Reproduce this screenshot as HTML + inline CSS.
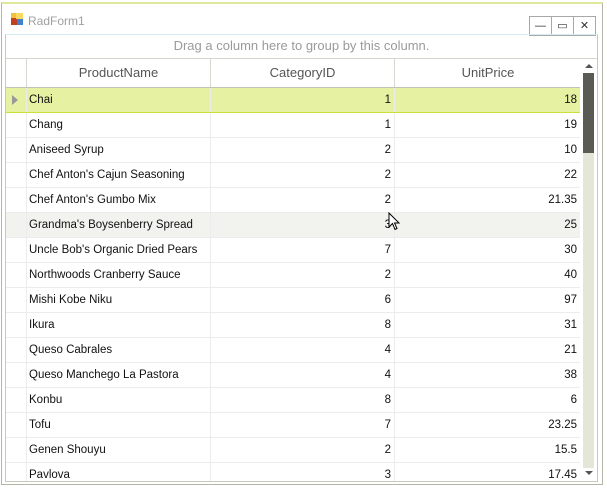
<!DOCTYPE html><html><head><style>
body{margin:0;width:607px;height:497px;background:#fff;position:relative;overflow:hidden;font-family:"Liberation Sans",sans-serif}
.win{position:absolute;left:1px;top:2px;width:600px;height:480px;border:1px solid #b4b4a8;border-top:2px solid #dfe89a;background:#fff}
.title{position:absolute;left:26px;top:10px;font-size:12px;color:#a0a0a0}
.icon{position:absolute;left:9px;top:9px;width:12px;height:12px}
.btn{position:absolute;top:12px;width:21px;height:18px;border:1px solid #a8a8a8;background:#fff;font-size:11px;text-align:center;line-height:18px;color:#333}
.grid{position:absolute;left:3px;top:30px;width:591px;height:446px;border:1px solid #c8c8bc;border-top-color:#d4ecf4;overflow:hidden}
.group{height:23px;border-bottom:1px solid #d6d6cc;text-align:center;font-size:13px;color:#9a9a9a;line-height:22px}
.hdr{position:absolute;top:24px;left:0;height:28px;width:574px;border-bottom:1px solid #c2c2b6}
.hdr div{position:absolute;top:0;height:28px;border-left:1px solid #d8d8d0;font-size:13px;color:#555;text-align:center;line-height:28px}
.row{position:absolute;left:0;width:574px;height:24px;border-bottom:1px solid #ececec;font-size:11.5px;color:#111}
.row div{position:absolute;top:0;height:24px;line-height:24px;border-left:1px solid #ececec;white-space:nowrap}
.c1{left:20px;width:180px;padding-left:2px}
.c2{left:204px;width:180px;text-align:right;padding-right:3px}
.c3{left:388px;width:182px;text-align:right;padding-right:3px}
.sel{background:#e6f2a2;border-bottom:1px solid #cbe03a}
.sb{position:absolute;left:575px;top:24px;width:15px;height:424px;background:#fff}
</style></head><body>
<div class="win">
<svg class="icon" viewBox="0 0 12 12"><rect x="0" y="0" width="12" height="12" fill="#f0c040"/><rect x="0" y="5" width="6" height="7" fill="#c04020"/><rect x="6" y="6" width="6" height="6" fill="#4080d0"/><rect x="5" y="0" width="7" height="6" fill="#f8d860"/></svg>
<div class="title">RadForm1</div>
<div class="btn" style="left:527px">&#8212;</div>
<div class="btn" style="left:549px">&#9645;</div>
<div class="btn" style="left:571px">&#x2715;</div>
<div class="grid">
<div class="group">Drag a column here to group by this column.</div>
<div class="hdr"><div style="left:20px;width:183px">ProductName</div><div style="left:204px;width:183px">CategoryID</div><div style="left:388px;width:186px">UnitPrice</div></div>
<div class="row sel" style="top:53px"><span style="position:absolute;left:6px;top:7px;width:0;height:0;border-left:6px solid #999;border-top:5px solid transparent;border-bottom:5px solid transparent"></span><div class="c1">Chai</div><div class="c2">1</div><div class="c3">18</div></div>
<div class="row" style="top:78px"><div class="c1">Chang</div><div class="c2">1</div><div class="c3">19</div></div>
<div class="row" style="top:103px"><div class="c1">Aniseed Syrup</div><div class="c2">2</div><div class="c3">10</div></div>
<div class="row" style="top:128px"><div class="c1">Chef Anton's Cajun Seasoning</div><div class="c2">2</div><div class="c3">22</div></div>
<div class="row" style="top:153px"><div class="c1">Chef Anton's Gumbo Mix</div><div class="c2">2</div><div class="c3">21.35</div></div>
<div class="row" style="top:178px;background:#f2f3ee"><div class="c1">Grandma's Boysenberry Spread</div><div class="c2">3</div><div class="c3">25</div></div>
<div class="row" style="top:203px"><div class="c1">Uncle Bob's Organic Dried Pears</div><div class="c2">7</div><div class="c3">30</div></div>
<div class="row" style="top:228px"><div class="c1">Northwoods Cranberry Sauce</div><div class="c2">2</div><div class="c3">40</div></div>
<div class="row" style="top:253px"><div class="c1">Mishi Kobe Niku</div><div class="c2">6</div><div class="c3">97</div></div>
<div class="row" style="top:278px"><div class="c1">Ikura</div><div class="c2">8</div><div class="c3">31</div></div>
<div class="row" style="top:303px"><div class="c1">Queso Cabrales</div><div class="c2">4</div><div class="c3">21</div></div>
<div class="row" style="top:328px"><div class="c1">Queso Manchego La Pastora</div><div class="c2">4</div><div class="c3">38</div></div>
<div class="row" style="top:353px"><div class="c1">Konbu</div><div class="c2">8</div><div class="c3">6</div></div>
<div class="row" style="top:378px"><div class="c1">Tofu</div><div class="c2">7</div><div class="c3">23.25</div></div>
<div class="row" style="top:403px"><div class="c1">Genen Shouyu</div><div class="c2">2</div><div class="c3">15.5</div></div>
<div class="row" style="top:428px"><div class="c1">Pavlova</div><div class="c2">3</div><div class="c3">17.45</div></div>
<div class="sb">
<span style="position:absolute;left:4px;top:5px;border-bottom:4px solid #555;border-left:4px solid transparent;border-right:4px solid transparent"></span>
<div style="position:absolute;left:2px;top:14px;width:11px;height:395px;background:#e4e6d8"></div>
<div style="position:absolute;left:2px;top:14px;width:11px;height:80px;background:#5b5b55"></div>
<span style="position:absolute;left:4px;top:412px;border-top:4px solid #555;border-left:4px solid transparent;border-right:4px solid transparent"></span>
</div>
</div>
</div>
<svg style="position:absolute;left:388px;top:212px" width="14" height="20" viewBox="0 0 14 20"><path d="M1 1 L1 15 L4.5 11.5 L7 17.5 L9 16.5 L6.5 11 L11 11 Z" fill="#fff" stroke="#000" stroke-width="1"/></svg>
</body></html>
